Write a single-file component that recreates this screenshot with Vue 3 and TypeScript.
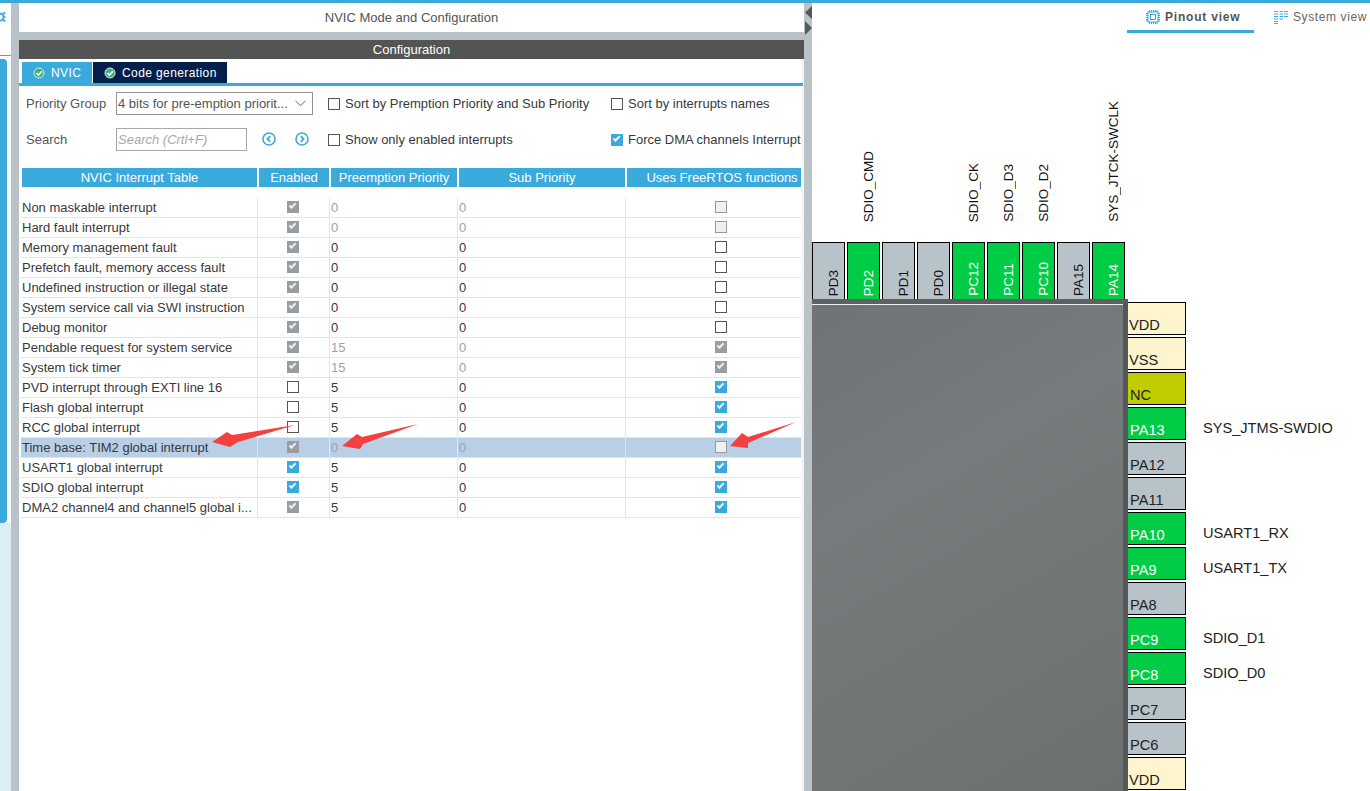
<template>
  <div class="app">
    <div class="topbar"></div>
    <div class="main">
      <aside class="rail">
        <div class="rail__gear">
          <svg width="11" height="16" viewBox="0 0 11 16">
            <circle cx="0" cy="8" r="3.6" fill="none" stroke="#3aa9dc" stroke-width="2" />
            <path d="M3.5 3.5 L5 5 M3.5 12.5 L5 11 M4.5 8 H5.5" stroke="#3aa9dc" stroke-width="2" />
          </svg>
        </div>
        <div class="rail__line"></div>
        <div class="rail__thumb"></div>
      </aside>
      <div class="splitter"></div>

      <section class="panel">
        <div class="panel__title">NVIC Mode and Configuration</div>
        <div class="panel__head">Configuration</div>
        <div class="tabs">
          <div class="tab tab--active">
            <svg class="tab__icon" width="12" height="12" viewBox="0 0 12 12">
              <circle cx="6" cy="6" r="5" fill="#3fae80" stroke="#d8f0e6" stroke-width="1" />
              <path d="M3.4 6 L5.4 8 L8.8 4.4" fill="none" stroke="#fff" stroke-width="1.6" />
            </svg>
            NVIC
          </div>
          <div class="tab tab--dark">
            <svg class="tab__icon" width="12" height="12" viewBox="0 0 12 12">
              <circle cx="6" cy="6" r="5" fill="#3fae80" stroke="#d8f0e6" stroke-width="1" />
              <path d="M3.4 6 L5.4 8 L8.8 4.4" fill="none" stroke="#fff" stroke-width="1.6" />
            </svg>
            Code generation
          </div>
        </div>

        <div class="form">
          <div class="form__row form__row--first">
            <span class="form__label">Priority Group</span>
            <div class="select">
              <span>4 bits for pre-emption priorit...</span>
              <svg width="11" height="7" viewBox="0 0 11 7">
                <path d="M0.5 0.8 L5.5 5.8 L10.5 0.8" fill="none" stroke="#666" stroke-width="1" />
              </svg>
            </div>
            <label class="check check--sort"><i class="box"></i>Sort by Premption Priority and Sub Priority</label>
            <label class="check"><i class="box"></i>Sort by interrupts names</label>
          </div>
          <div class="form__row form__row--second">
            <span class="form__label">Search</span>
            <div class="search">Search (Crtl+F)</div>
            <div class="nav">
              <svg width="14" height="14" viewBox="0 0 14 14">
                <circle cx="7" cy="7" r="6" fill="none" stroke="#3aa9dc" stroke-width="1.6" />
                <path d="M8.2 4.2 L5.4 7 L8.2 9.8" fill="none" stroke="#3aa9dc" stroke-width="1.8" />
              </svg>
              <svg width="14" height="14" viewBox="0 0 14 14">
                <circle cx="7" cy="7" r="6" fill="none" stroke="#3aa9dc" stroke-width="1.6" />
                <path d="M5.8 4.2 L8.6 7 L5.8 9.8" fill="none" stroke="#3aa9dc" stroke-width="1.8" />
              </svg>
            </div>
            <label class="check check--show"><i class="box"></i>Show only enabled interrupts</label>
            <label class="check"><i class="box box--on"></i>Force DMA channels Interrupt</label>
          </div>
        </div>

        <div class="table">
          <div class="thead">
            <div>NVIC Interrupt Table</div>
            <div>Enabled</div>
            <div>Preemption Priority</div>
            <div>Sub Priority</div>
            <div class="thead__rtos">Uses FreeRTOS functions</div>
          </div>
          <div class="tbody">
            <div
              v-for="row in rows"
              :key="row.name"
              class="trow"
              :class="{ 'trow--selected': row.selected }"
            >
              <div class="cell cell--name">{{ row.name }}</div>
              <div class="cell cell--box"><i class="box" :class="boxClass(row.enabled)"></i></div>
              <div class="cell" :class="numClass(row.dim)">{{ row.pre }}</div>
              <div class="cell" :class="numClass(row.dim)">0</div>
              <div class="cell cell--box"><i class="box" :class="boxClass(row.rtos)"></i></div>
            </div>
          </div>
        </div>
      </section>

      <div class="splitter splitter--arrows">
        <svg width="8" height="32" viewBox="0 0 8 32">
          <path d="M8 2 L1 8.5 L8 15 Z M1 17 L8 24 L1 31 Z" fill="#55595a" />
        </svg>
      </div>

      <section class="canvas">
        <div class="views">
          <div class="view view--active">
            <svg width="14" height="14" viewBox="0 0 14 14">
              <rect x="2" y="2" width="10" height="10" fill="none" stroke="#3aa9dc" stroke-width="1" />
              <rect x="4.5" y="4.5" width="5" height="5" fill="none" stroke="#3aa9dc" stroke-width="1" />
              <path d="M3.5 0V2M5.5 0V2M7.5 0V2M9.5 0V2M11 0V2M3.5 12V14M5.5 12V14M7.5 12V14M9.5 12V14M11 12V14M0 3.5H2M0 5.5H2M0 7.5H2M0 9.5H2M0 11H2M12 3.5H14M12 5.5H14M12 7.5H14M12 9.5H14M12 11H14" stroke="#3aa9dc" stroke-width="1" />
            </svg>
            Pinout view
          </div>
          <div class="view">
            <svg width="14" height="14" viewBox="0 0 14 14">
              <path d="M0 1.5H4M5.5 1.5H9M10 1.5H14M0 4H4M5.5 4H9M10 4H14M0 6.5H4M5.5 6.5H9M10 6.5H14M0 9H4M5.5 9H9M0 11.5H4M0 13.5H4" stroke="#3aa9dc" stroke-width="1" />
            </svg>
            System view
          </div>
        </div>

        <div class="signals">
          <div v-for="pin in topPins" :key="pin.name" class="signal">
            <span v-if="pin.signal" class="vtext">{{ pin.signal }}</span>
          </div>
        </div>
        <div class="toppins">
          <div v-for="pin in topPins" :key="pin.name" class="toppin" :class="`pin--${pin.kind}`">
            <span class="vtext">{{ pin.name }}</span>
          </div>
        </div>

        <div class="body">
          <div class="chip"></div>
          <div class="sidepins">
            <div v-for="(pin, i) in sidePins" :key="i" class="siderow">
              <div class="sidepin" :class="`pin--${pin.kind}`">{{ pin.name }}</div>
              <span v-if="pin.signal" class="sidepin__signal">{{ pin.signal }}</span>
            </div>
          </div>
        </div>
      </section>
    </div>

    <svg class="arrows" width="1370" height="791" viewBox="0 0 1370 791">
      <polygon points="212,442 227,432 232,435 295,425 238,442 230,447" />
      <polygon points="342,446 357,434 362,437 418,424 363,444 360,449" />
      <polygon points="730,446 742,433 748,437 796,422 748,443 748,448" />
    </svg>
  </div>
</template>

<script setup lang="ts">
type BoxState = 'off' | 'on' | 'dis' | 'disOff';
type PinKind = 'gray' | 'green' | 'power' | 'nc';

interface IrqRow {
  name: string;
  enabled: BoxState;
  pre: string;
  dim?: boolean;
  rtos: BoxState;
  selected?: boolean;
}

interface Pin {
  name: string;
  kind: PinKind;
  signal?: string;
}

const rows: IrqRow[] = [
  { name: 'Non maskable interrupt', enabled: 'dis', pre: '0', dim: true, rtos: 'disOff' },
  { name: 'Hard fault interrupt', enabled: 'dis', pre: '0', dim: true, rtos: 'disOff' },
  { name: 'Memory management fault', enabled: 'dis', pre: '0', rtos: 'off' },
  { name: 'Prefetch fault, memory access fault', enabled: 'dis', pre: '0', rtos: 'off' },
  { name: 'Undefined instruction or illegal state', enabled: 'dis', pre: '0', rtos: 'off' },
  { name: 'System service call via SWI instruction', enabled: 'dis', pre: '0', rtos: 'off' },
  { name: 'Debug monitor', enabled: 'dis', pre: '0', rtos: 'off' },
  { name: 'Pendable request for system service', enabled: 'dis', pre: '15', dim: true, rtos: 'dis' },
  { name: 'System tick timer', enabled: 'dis', pre: '15', dim: true, rtos: 'dis' },
  { name: 'PVD interrupt through EXTI line 16', enabled: 'off', pre: '5', rtos: 'on' },
  { name: 'Flash global interrupt', enabled: 'off', pre: '5', rtos: 'on' },
  { name: 'RCC global interrupt', enabled: 'off', pre: '5', rtos: 'on' },
  { name: 'Time base: TIM2 global interrupt', enabled: 'dis', pre: '0', dim: true, rtos: 'disOff', selected: true },
  { name: 'USART1 global interrupt', enabled: 'on', pre: '5', rtos: 'on' },
  { name: 'SDIO global interrupt', enabled: 'on', pre: '5', rtos: 'on' },
  { name: 'DMA2 channel4 and channel5 global i...', enabled: 'dis', pre: '5', rtos: 'on' },
];

const topPins: Pin[] = [
  { name: 'PD3', kind: 'gray' },
  { name: 'PD2', kind: 'green', signal: 'SDIO_CMD' },
  { name: 'PD1', kind: 'gray' },
  { name: 'PD0', kind: 'gray' },
  { name: 'PC12', kind: 'green', signal: 'SDIO_CK' },
  { name: 'PC11', kind: 'green', signal: 'SDIO_D3' },
  { name: 'PC10', kind: 'green', signal: 'SDIO_D2' },
  { name: 'PA15', kind: 'gray' },
  { name: 'PA14', kind: 'green', signal: 'SYS_JTCK-SWCLK' },
];

const sidePins: Pin[] = [
  { name: 'VDD', kind: 'power' },
  { name: 'VSS', kind: 'power' },
  { name: 'NC', kind: 'nc' },
  { name: 'PA13', kind: 'green', signal: 'SYS_JTMS-SWDIO' },
  { name: 'PA12', kind: 'gray' },
  { name: 'PA11', kind: 'gray' },
  { name: 'PA10', kind: 'green', signal: 'USART1_RX' },
  { name: 'PA9', kind: 'green', signal: 'USART1_TX' },
  { name: 'PA8', kind: 'gray' },
  { name: 'PC9', kind: 'green', signal: 'SDIO_D1' },
  { name: 'PC8', kind: 'green', signal: 'SDIO_D0' },
  { name: 'PC7', kind: 'gray' },
  { name: 'PC6', kind: 'gray' },
  { name: 'VDD', kind: 'power' },
];

function boxClass(state: BoxState): string {
  if (state === 'on') return 'box--on';
  if (state === 'dis') return 'box--dis';
  if (state === 'disOff') return 'box--disoff';
  return '';
}

function numClass(dim?: boolean) {
  return { num: true, 'num--dim': dim };
}
</script>

<style scoped>
.app {
  position: relative;
  width: 1370px;
  height: 791px;
  overflow: hidden;
  background: #fff;
  font-family: "Liberation Sans", Arial, sans-serif;
  font-size: 13px;
  color: #39393b;
}

.topbar {
  height: 3px;
  background: #3aa9dc;
}

.main {
  display: flex;
  height: 788px;
}

/* left rail, mostly cut off */
.rail {
  width: 11px;
  flex-shrink: 0;
  display: flex;
  flex-direction: column;
  background: linear-gradient(#fff 520px, #dcedf6 520px);
}

.rail__gear {
  height: 52px;
  padding-top: 6px;
  box-sizing: border-box;
  background: #fff;
}

.rail__line {
  height: 1px;
  background: #3aa9dc;
}

.rail__thumb {
  width: 7px;
  height: 464px;
  margin-top: 3px;
  border-radius: 0 4px 4px 0;
  background: #3aa9dc;
}

.splitter {
  width: 8px;
  flex-shrink: 0;
  background: #b8c2c7;
}

.splitter--arrows svg {
  display: block;
  margin-top: 1px;
}

.panel {
  width: 785px;
  flex-shrink: 0;
  display: flex;
  flex-direction: column;
  background: linear-gradient(to right, #fff 782px, #f4f5f5 782px);
}

.panel__title {
  height: 29px;
  line-height: 29px;
  text-align: center;
  background: #fff;
  color: #555;
}

.panel__head {
  height: 19px;
  line-height: 19px;
  border-top: 8px solid #b8c2c7;
  text-align: center;
  background: #535554;
  color: #fff;
}

.tabs {
  display: flex;
  gap: 1px;
  height: 21px;
  margin-top: 3px;
  padding-left: 3px;
}

.tab {
  display: flex;
  align-items: center;
  gap: 6px;
  font-size: 12px;
  color: #fff;
  letter-spacing: 0.4px;
}

.tab--active {
  width: 70px;
  padding-left: 11px;
  box-sizing: border-box;
  background: #3aa9dc;
}

.tab--dark {
  width: 134px;
  padding-left: 11px;
  box-sizing: border-box;
  background: #04204a;
}

.form {
  margin-right: 1px;
  border-top: 3px solid #3aa9dc;
  height: 85px;
  box-sizing: border-box;
}

.form__row {
  display: flex;
  align-items: center;
  padding-left: 7px;
}

.form__row--first {
  height: 23px;
  margin-top: 6px;
}

.form__row--second {
  height: 23px;
  margin-top: 13px;
}

.form__label {
  width: 90px;
  flex-shrink: 0;
  color: #555;
}

.select {
  width: 197px;
  height: 23px;
  box-sizing: border-box;
  display: flex;
  align-items: center;
  justify-content: space-between;
  padding: 0 6px 0 1px;
  border: 1px solid #8f9396;
  color: #555;
}

.search {
  width: 131px;
  height: 23px;
  box-sizing: border-box;
  line-height: 21px;
  padding-left: 1px;
  border: 1px solid #a4a8ab;
  color: #a9a9a9;
  font-style: italic;
}

.nav {
  display: flex;
  gap: 19px;
  margin: 0 0 2px 15px;
}

.nav svg {
  display: block;
}

.check {
  display: flex;
  align-items: center;
  gap: 5px;
  white-space: nowrap;
  color: #39393b;
}

.check--sort {
  margin-left: 15px;
  width: 283px;
}

.check--show {
  margin-left: 19px;
  width: 283px;
}

.box {
  display: block;
  position: relative;
  width: 12px;
  height: 12px;
  box-sizing: border-box;
  flex-shrink: 0;
  border: 1px solid #555;
  background: #fff;
}

.box--on,
.box--dis {
  border: none;
  background: #3aa9dc;
}

.box--dis {
  background: #999ca0;
}

.box--on::after,
.box--dis::after {
  content: "";
  position: absolute;
  left: 2px;
  top: 2px;
  width: 7px;
  height: 4px;
  border-left: 2px solid #e6f2f8;
  border-bottom: 2px solid #e6f2f8;
  transform: rotate(-45deg);
  box-sizing: border-box;
}

.box--disoff {
  border: 1px solid #999;
  background: #eff0f2;
}

.table {
  padding-left: 2px;
}

.thead {
  display: grid;
  grid-template-columns: 235px 70px 126px 166px 174px;
  column-gap: 2px;
  height: 19px;
  margin-left: 1px;
}

.thead div {
  line-height: 19px;
  text-align: center;
  background: #3aa9dc;
  color: #fff;
}

.thead .thead__rtos {
  padding-left: 16px;
}

.tbody {
  margin-top: 11px;
  width: 780px;
}

.trow {
  display: grid;
  grid-template-columns: 237px 72px 128px 168px 175px;
  height: 20px;
  box-sizing: border-box;
  border-bottom: 1px solid #e4e4e4;
}

.trow--selected {
  background: #b8cfe6;
}

.cell {
  display: flex;
  align-items: center;
  box-sizing: border-box;
  padding-left: 1px;
  border-right: 1px solid #e4e4e4;
  white-space: nowrap;
  overflow: hidden;
}

.cell:last-child {
  border-right: none;
}

.cell--box {
  justify-content: center;
  padding: 0 1px 0 0;
}

.cell--box .box {
  margin-bottom: 1px;
}

.trow .cell--box:last-child {
  padding: 0 0 0 14px;
}

.num {
  color: #39393b;
}

.num--dim {
  color: #a0a2a6;
}

/* pinout side */
.canvas {
  flex: 1;
  min-width: 0;
  position: relative;
}

.views {
  display: flex;
  height: 27px;
  padding-left: 315px;
  box-sizing: border-box;
  font-size: 12px;
}

.view {
  display: flex;
  align-items: center;
  gap: 5px;
  height: 27px;
  color: #666;
  letter-spacing: 0.6px;
}

.view--active {
  box-sizing: border-box;
  width: 127px;
  height: 30px;
  padding-left: 19px;
  border-bottom: 3px solid #3aa9dc;
  font-weight: bold;
  color: #555;
  margin-right: 20px;
  letter-spacing: 0.8px;
}

.signals {
  display: flex;
  gap: 2px;
  height: 172px;
  margin-top: 20px;
}

.signal,
.toppin {
  width: 33px;
  flex-shrink: 0;
}

.signal {
  display: flex;
  align-items: flex-end;
  justify-content: center;
  padding-left: 9px;
  box-sizing: border-box;
}

.vtext {
  writing-mode: vertical-rl;
  transform: rotate(180deg);
  white-space: nowrap;
  font-size: 13.5px;
  line-height: 15px;
  color: #111;
}

.toppins {
  display: flex;
  gap: 2px;
  height: 58px;
  margin-top: 20px;
}

.toppin {
  height: 58px;
  box-sizing: border-box;
  border: 1px solid #000;
  display: flex;
  align-items: flex-end;
  justify-content: center;
  padding: 0 0 3px 9px;
}

.pin--gray {
  background: #b8c2c9;
}

.pin--green {
  background: #00cc45;
}

.pin--power {
  background: #fef5cf;
}

.pin--nc {
  background: #bfcc00;
}

.pin--green,
.pin--green .vtext {
  color: #fff;
}

.body {
  display: flex;
  height: 492px;
  margin-top: -1px;
}

.chip {
  width: 316px;
  height: 492px;
  box-sizing: border-box;
  border-top: 5px solid #5d6060;
  border-right: 5px solid #555858;
  box-shadow: inset 0 1px 0 #f0f0f0;
  background: linear-gradient(150deg, #6f7376, #787b7d 35%, #6c706f);
}

.sidepins {
  display: flex;
  flex-direction: column;
  gap: 2px;
  padding-top: 3px;
}

.siderow {
  display: flex;
  align-items: flex-start;
  flex-shrink: 0;
  height: 33px;
}

.sidepin {
  width: 58px;
  height: 33px;
  box-sizing: border-box;
  padding: 14px 0 0 2px;
  border: 1px solid #000;
  border-left: none;
  font-size: 14.6px;
  line-height: 16px;
  color: #222;
}

.sidepin.pin--power {
  padding-left: 1px;
}

.sidepin.pin--green {
  color: #fff;
}

.sidepin__signal {
  margin-left: 17px;
  padding-top: 13px;
  font-size: 14.6px;
  line-height: 16px;
  color: #222;
}

.arrows {
  position: absolute;
  left: 0;
  top: 0;
  pointer-events: none;
}

.arrows polygon {
  fill: #f44040;
}
</style>

<style>
html,
body {
  margin: 0;
  overflow: hidden;
  background: #fff;
}
</style>
